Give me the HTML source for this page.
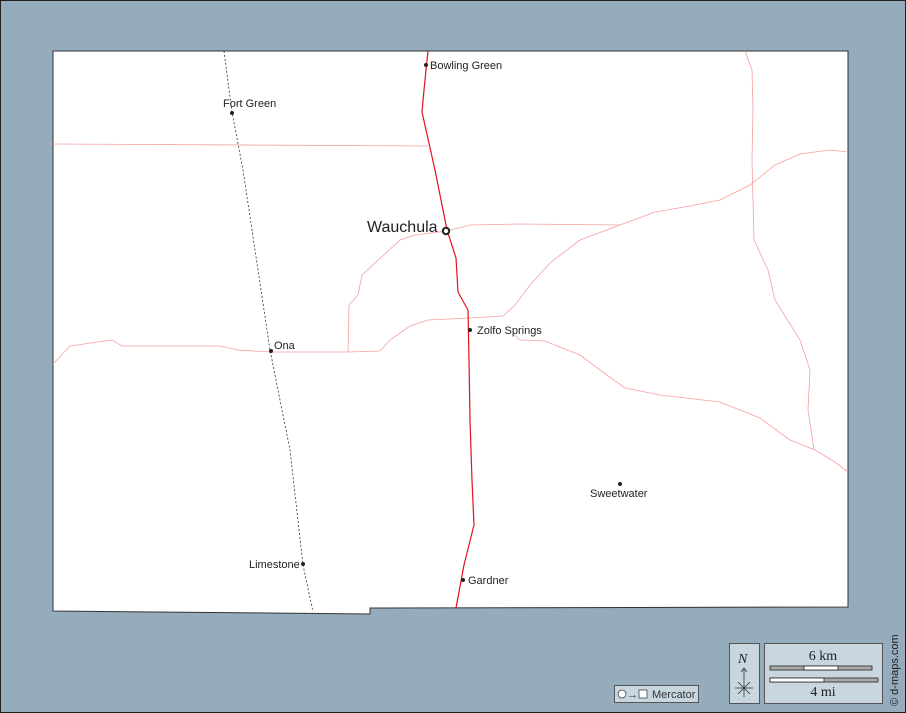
<!DOCTYPE html>
<html><head><meta charset="utf-8"><style>
html,body{margin:0;padding:0;width:906px;height:713px;overflow:hidden;background:#95acbc}
svg{display:block}
text{font-family:"Liberation Sans",Arial,sans-serif}
text.s{font-family:"Liberation Serif",serif}
</style></head><body>
<svg width="906" height="713" viewBox="0 0 906 713">
<rect x="0.5" y="0.5" width="905" height="712" fill="#95acbc" stroke="#222" stroke-width="1"/>
<polygon points="53,51 848,51 848,607 370,608 370,614 53,611" fill="#fff" stroke="#333" stroke-width="1"/>
<g fill="none" stroke="#f4a0a0" stroke-width="0.8">
<path d="M53,144 L428,146"/>
<path d="M53,364 L70,346 L112,340 L122,346 L220,346 L238,350 L270,352 L348,352 L380,351 L390,340 L410,326 L428,320 L470,318 L503,316 L515,305 L530,285 L550,263 L580,240 L620,225 L655,212 L690,206 L720,200 L750,185 L775,165 L800,154 L830,150 L848,152"/>
<path d="M348,352 L349,305 L358,295 L362,275 L400,240 L415,235 L447,231 L470,225 L520,224 L620,225"/>
<path d="M513,334 L520,340 L545,341 L580,355 L600,370 L625,388 L660,395 L720,402 L760,418 L790,440 L815,450 L835,462 L848,472"/>
<path d="M745,51 L752,70 L753,110 L752,160 L754,240 L768,270 L775,300 L800,340 L810,370 L808,410 L814,450"/>
</g>
<path d="M428,51 L426,70 L424,90 L422,112 L435,170 L447,230 L456,258 L458,292 L468,310 L469,360 L470,420 L472,480 L474,525 L464,565 L456,608" fill="none" stroke="#e4101a" stroke-width="1.2"/>
<path d="M224,51 L232,112 L243,170 L255,250 L270,350 L290,450 L303,565 L313,612" fill="none" stroke="#333" stroke-width="0.8" stroke-dasharray="2,2"/>
<g fill="#222">
<circle cx="426" cy="65" r="2"/><circle cx="232" cy="113" r="2"/><circle cx="271" cy="351" r="2"/>
<circle cx="470" cy="330" r="2"/><circle cx="620" cy="484" r="2"/><circle cx="303" cy="564" r="2"/><circle cx="463" cy="580" r="2"/>
</g>
<circle cx="446" cy="231" r="3.2" fill="#fff" stroke="#222" stroke-width="2"/>
<g font-size="11" fill="#222">
<text x="430" y="69">Bowling Green</text>
<text x="223" y="107">Fort Green</text>
<text x="274" y="349">Ona</text>
<text x="477" y="334">Zolfo Springs</text>
<text x="590" y="497">Sweetwater</text>
<text x="249" y="568">Limestone</text>
<text x="468" y="584">Gardner</text>
</g>
<text x="367" y="232" font-size="16" fill="#222">Wauchula</text>
<rect x="614.5" y="685.5" width="84" height="17" fill="#c8d6df" stroke="#555"/>
<circle cx="622" cy="694" r="4" fill="#fff" stroke="#444" stroke-width="0.8"/>
<text x="627" y="698" font-size="11" fill="#333">→</text>
<rect x="639" y="690" width="8" height="8" fill="#fff" stroke="#444" stroke-width="0.8"/>
<text x="652" y="698" font-size="11" fill="#333">Mercator</text>
<rect x="729.5" y="643.5" width="30" height="60" fill="#c8d6df" stroke="#555"/>
<text class="s" x="738" y="663" font-size="14" font-style="italic" fill="#222">N</text>
<path d="M744,668 L744,697 M741,672 L744,668 L747,672 M735,688 L753,688 M738,682 L750,694 M750,682 L738,694" stroke="#333" stroke-width="0.8" fill="none"/>
<rect x="764.5" y="643.5" width="118" height="60" fill="#c8d6df" stroke="#555"/>
<text class="s" x="823" y="660" font-size="14" text-anchor="middle" fill="#222">6 km</text>
<rect x="770" y="666" width="102" height="4" fill="#aaa" stroke="#222" stroke-width="0.8"/>
<rect x="804" y="666" width="34" height="4" fill="#fff" stroke="#222" stroke-width="0.8"/>
<rect x="770" y="678" width="108" height="4" fill="#aaa" stroke="#222" stroke-width="0.8"/>
<rect x="770" y="678" width="54" height="4" fill="#fff" stroke="#222" stroke-width="0.8"/>
<text class="s" x="823" y="696" font-size="14" text-anchor="middle" fill="#222">4 mi</text>
<text transform="translate(898,706) rotate(-90)" font-size="11" fill="#222">© d-maps.com</text>
</svg>
</body></html>
